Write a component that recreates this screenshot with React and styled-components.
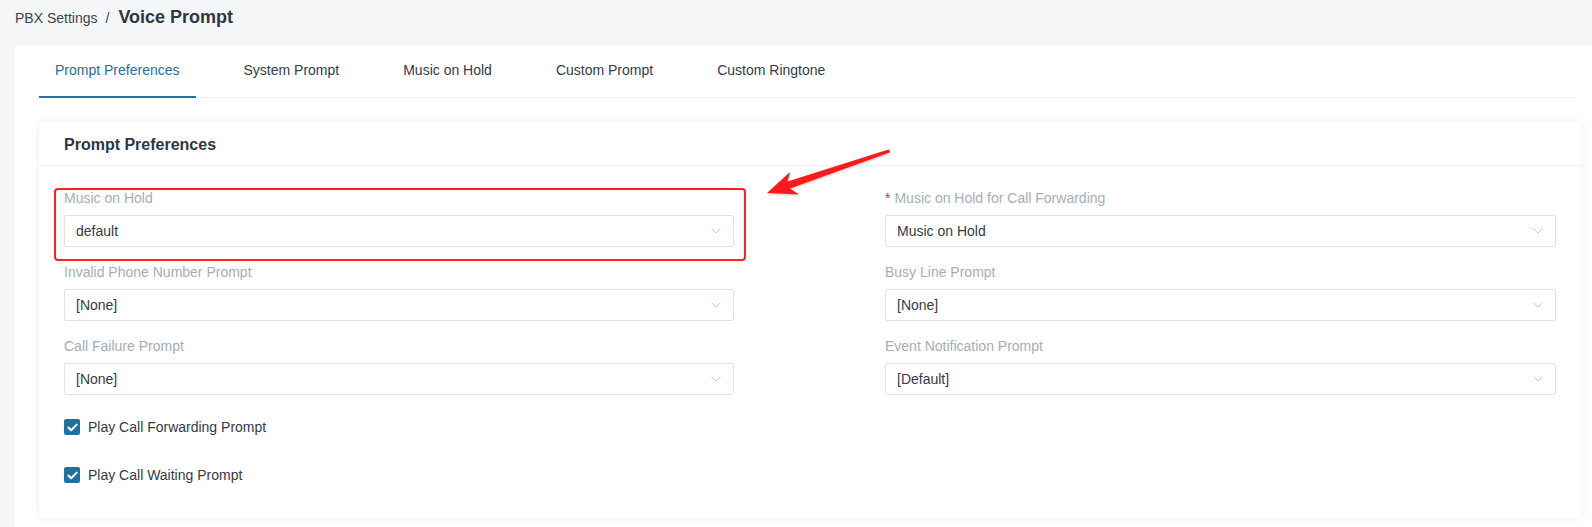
import React from 'react';
import styled, { createGlobalStyle } from 'styled-components';

const GlobalStyle = createGlobalStyle`
    html, body {
        margin: 0;
        padding: 0;
        background: #f5f6f8;
        font-family: "Liberation Sans", Arial, sans-serif;
        color: #333b48;
    }
    * {
        box-sizing: border-box;
    }
`;

const Page = styled.div`
    min-height: 100vh;
    background: #f5f6f8;
    overflow: hidden;
`;

const Breadcrumb = styled.div`
    height: 46px;
    padding: 6px 0 0 15px;
    display: flex;
    align-items: baseline;
    line-height: 22px;
`;

const Crumb = styled.span`
    font-size: 14px;
    color: #3b4350;
`;

const Slash = styled.span`
    font-size: 14px;
    color: #3b4350;
    margin: 0 9px 0 8px;
`;

const Current = styled.span`
    font-size: 18px;
    font-weight: bold;
    color: #2e3746;
`;

const Panel = styled.div`
    margin-left: 15px;
    background: #ffffff;
    padding: 0 11px 30px 24px;
    min-height: 481px;
`;

const TabBar = styled.div`
    display: flex;
    border-bottom: 1px solid #ebedf0;
    margin-right: 6px;
`;

const Tab = styled.div`
    height: 52px;
    margin-bottom: -1px;
    padding: 0 16px 2px;
    margin-right: 32px;
    display: flex;
    align-items: center;
    font-size: 14px;
    cursor: pointer;
    color: ${props => (props.active ? '#1f6f9f' : '#333b48')};
    border-bottom: 2px solid ${props => (props.active ? '#1f74a5' : 'transparent')};
`;

const Card = styled.div`
    position: relative;
    margin-top: 24px;
    background: #ffffff;
    border-radius: 3px;
    box-shadow: 0 0 8px rgba(20, 30, 50, 0.07);
`;

const CardHeader = styled.div`
    height: 44px;
    padding: 3px 25px 0;
    display: flex;
    align-items: center;
    border-bottom: 1px solid #eceef1;
    font-size: 16px;
    font-weight: bold;
    color: #2d3645;
`;

const CardBody = styled.div`
    padding: 22px 25px 27px;
`;

const FormGrid = styled.div`
    display: grid;
    grid-template-columns: 670px 671px;
    justify-content: space-between;
`;

const Field = styled.div`
    position: relative;
    margin-bottom: 15px;
`;

const Label = styled.div`
    font-size: 14px;
    line-height: 20px;
    height: 20px;
    margin-bottom: 7px;
    color: #a5adb7;
`;

const Required = styled.span`
    color: #f5222d;
    margin-right: 4px;
`;

const Select = styled.div`
    height: 32px;
    border: 1px solid #e1e3e6;
    border-radius: 2px;
    padding: 0 12px 0 11px;
    display: flex;
    align-items: center;
    justify-content: space-between;
    font-size: 14px;
    color: #333b48;
`;

const Highlight = styled.div`
    position: absolute;
    top: 0;
    left: -10px;
    right: -12px;
    bottom: -14px;
    border: 2px solid #ff1f1f;
    border-radius: 4px;
    pointer-events: none;
`;

const ArrowMark = styled.svg`
    position: absolute;
    left: 721px;
    top: 23px;
    overflow: visible;
    filter: drop-shadow(0 1px 1px rgba(120, 0, 0, 0.25));
`;

const Checks = styled.div`
    padding-top: 1px;
`;

const CheckRow = styled.label`
    height: 32px;
    display: flex;
    align-items: center;
    font-size: 14px;
    color: #333b48;
    & + & {
        margin-top: 16px;
    }
`;

const CheckBox = styled.span`
    width: 16px;
    height: 16px;
    border-radius: 2px;
    background: #21709f;
    display: flex;
    align-items: center;
    justify-content: center;
    margin-right: 8px;
`;

const Chevron = () => (
    <svg width="10" height="6" viewBox="0 0 10 6">
        <path d="M0.5 0.5 L5 5 L9.5 0.5" fill="none" stroke="#c9ccd1" strokeWidth="1" />
    </svg>
);

const Tick = () => (
    <svg width="11" height="9" viewBox="0 0 11 9">
        <path d="M1.3 4.6 L4.2 7.3 L9.7 1.6" fill="none" stroke="#ffffff" strokeWidth="2" strokeLinecap="round" strokeLinejoin="round" />
    </svg>
);

const tabs = ['Prompt Preferences', 'System Prompt', 'Music on Hold', 'Custom Prompt', 'Custom Ringtone'];

const fields = [
    { label: 'Music on Hold', value: 'default', highlight: true },
    { label: 'Music on Hold for Call Forwarding', value: 'Music on Hold', required: true },
    { label: 'Invalid Phone Number Prompt', value: '[None]' },
    { label: 'Busy Line Prompt', value: '[None]' },
    { label: 'Call Failure Prompt', value: '[None]' },
    { label: 'Event Notification Prompt', value: '[Default]' },
];

const checks = ['Play Call Forwarding Prompt', 'Play Call Waiting Prompt'];

const App = () => {
    return (
        <>
            <GlobalStyle />
            <Page>
                <Breadcrumb>
                    <Crumb>PBX Settings</Crumb>
                    <Slash>/</Slash>
                    <Current>Voice Prompt</Current>
                </Breadcrumb>
                <Panel>
                    <TabBar>
                        {tabs.map((t, i) => (
                            <Tab key={t} active={i === 0}>{t}</Tab>
                        ))}
                    </TabBar>
                    <Card>
                        <CardHeader>Prompt Preferences</CardHeader>
                        <CardBody>
                            <FormGrid>
                                {fields.map(f => (
                                    <Field key={f.label}>
                                        <Label>
                                            {f.required && <Required>*</Required>}
                                            {f.label}
                                        </Label>
                                        <Select>
                                            <span>{f.value}</span>
                                            <Chevron />
                                        </Select>
                                        {f.highlight && <Highlight />}
                                    </Field>
                                ))}
                            </FormGrid>
                            <Checks>
                                {checks.map(c => (
                                    <CheckRow key={c}>
                                        <CheckBox><Tick /></CheckBox>
                                        {c}
                                    </CheckRow>
                                ))}
                            </Checks>
                        </CardBody>
                        <ArrowMark width="135" height="55" viewBox="0 0 135 55">
                            <polygon
                                points="7,48 30,27 27.5,36.5 128.5,4.6 130,6 129.6,7.6 30,43.5 39,49.5"
                                fill="#ff1a1a"
                            />
                        </ArrowMark>
                    </Card>
                </Panel>
            </Page>
        </>
    );
};

export default App;
